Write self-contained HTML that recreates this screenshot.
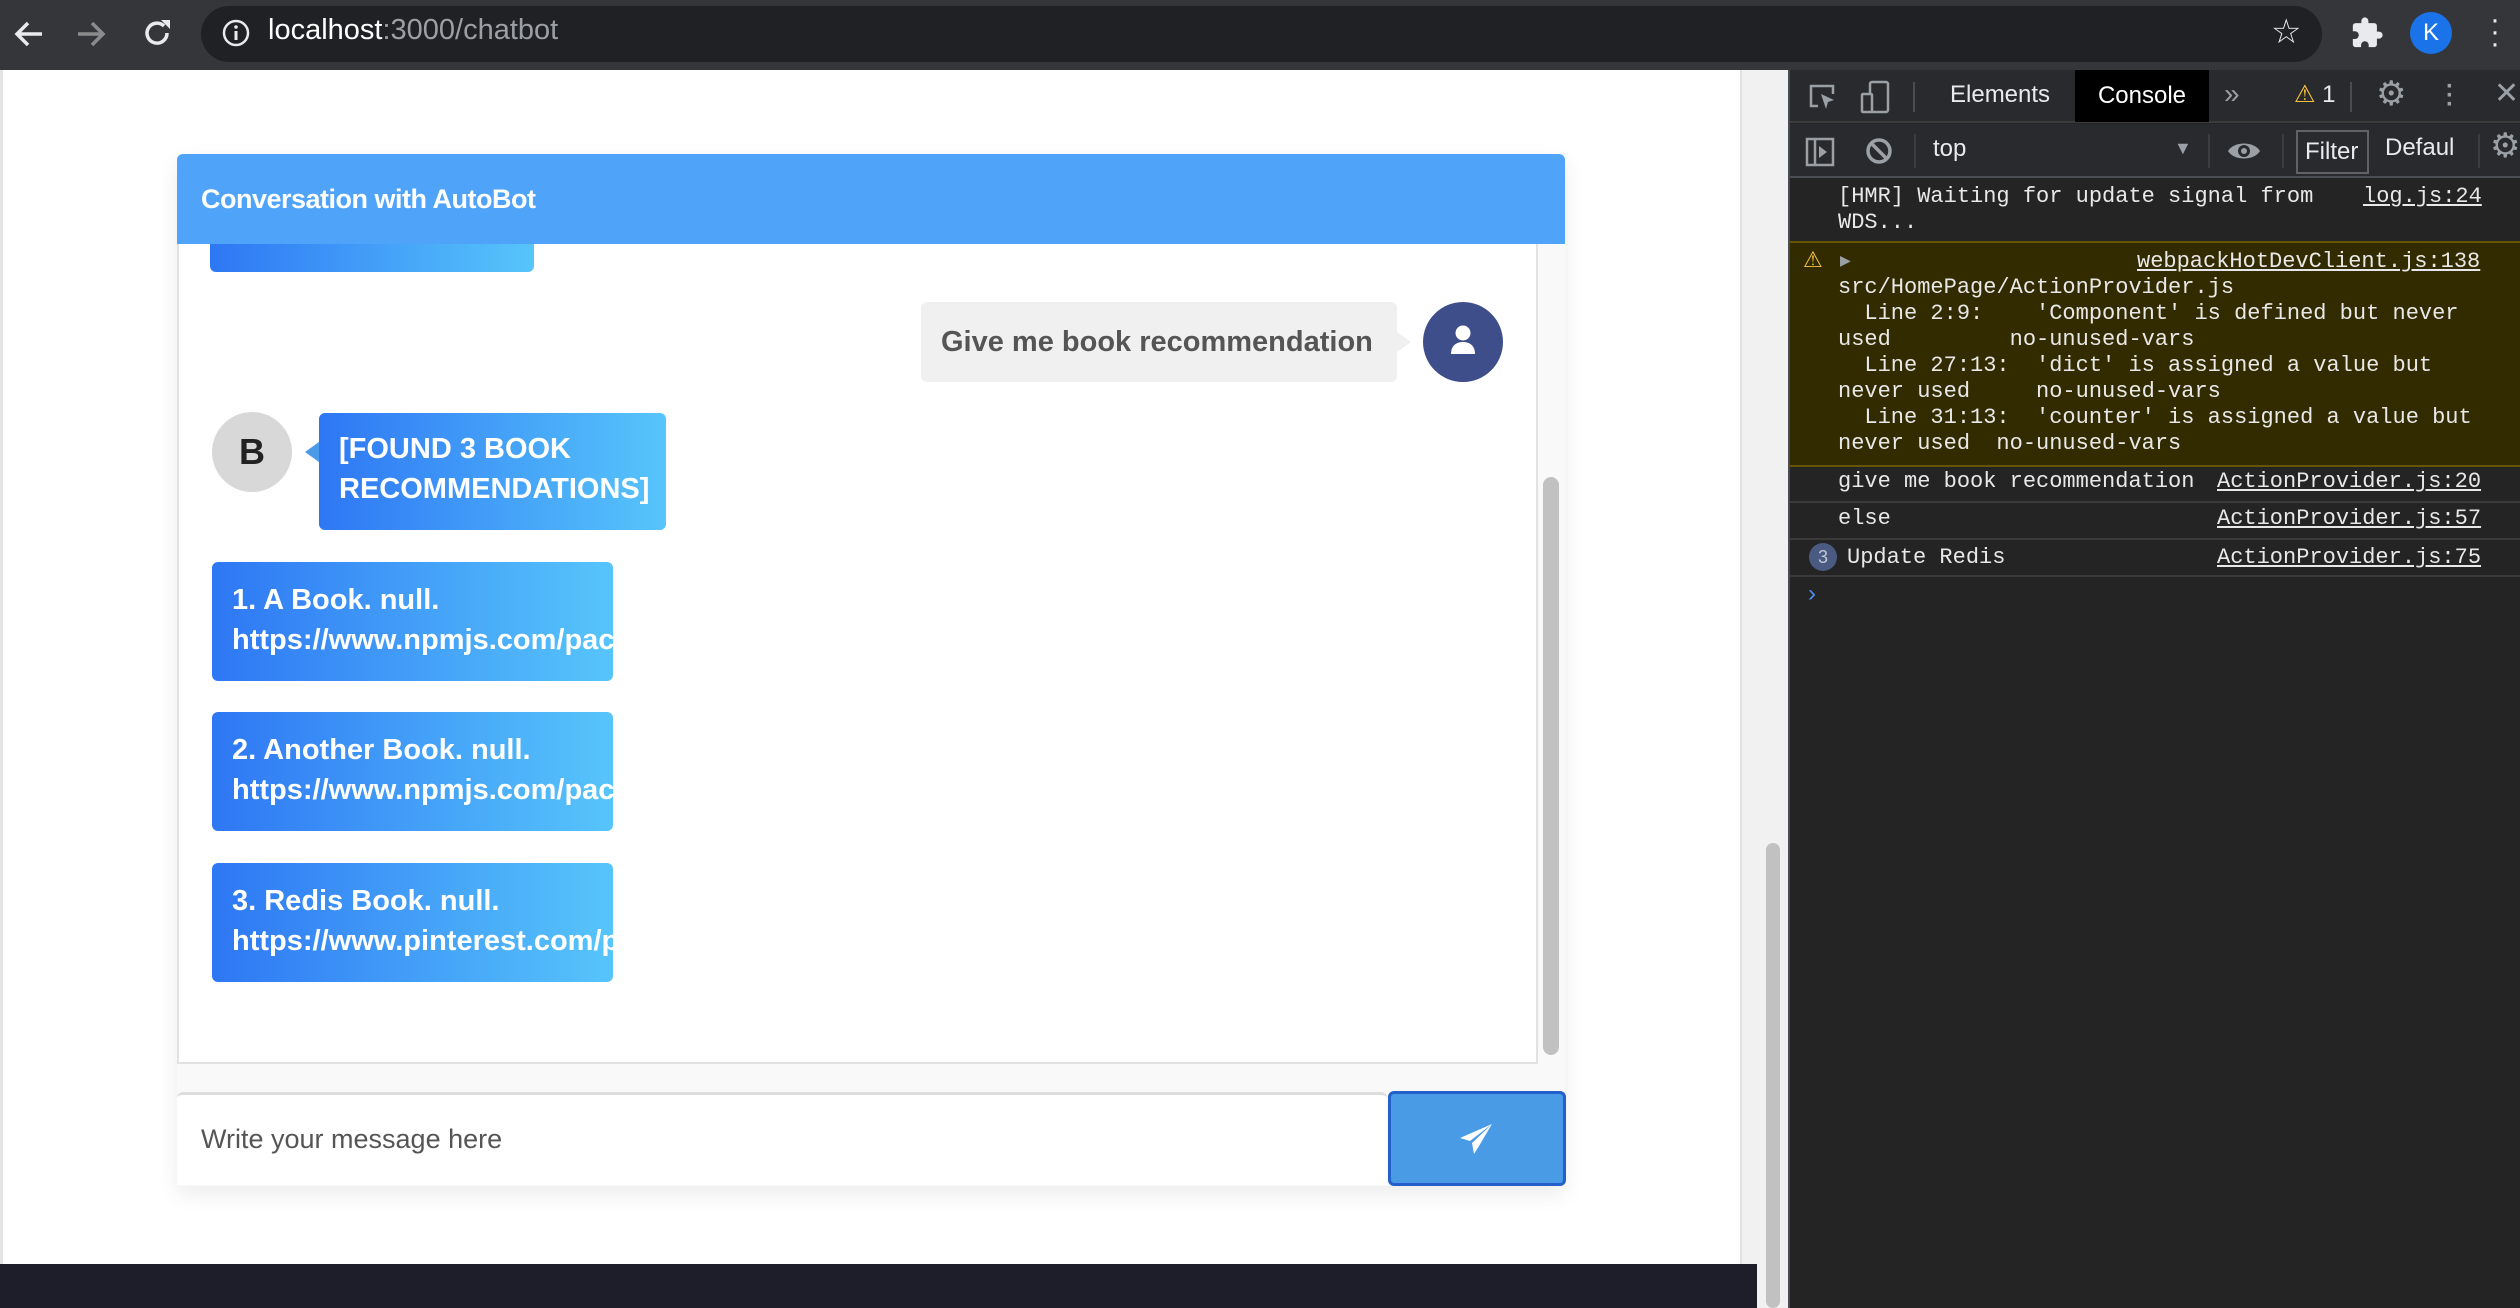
<!DOCTYPE html>
<html><head><meta charset="utf-8"><style>
*{margin:0;padding:0;box-sizing:border-box}
body{width:2520px;height:1308px;overflow:hidden;background:#fff;position:relative;font-family:"Liberation Sans",sans-serif}
.a{position:absolute}
.mono{font-family:"Liberation Mono",monospace;font-size:22px;color:#e8e8e8;white-space:pre;line-height:26px}
.lnk{text-decoration:underline}
.grad{background:linear-gradient(90deg,#2e77f4,#57c5fb);border-radius:6px;color:#fff;font-weight:bold;font-size:29px;line-height:40px;overflow:hidden;white-space:nowrap}
</style></head><body>
<!-- chrome top bar -->
<div class="a" style="left:0;top:0;width:2520px;height:70px;background:#35363a"></div>
<div class="a" style="left:201px;top:6px;width:2121px;height:56px;background:#202124;border-radius:28px"></div>
<svg class="a" style="left:12px;top:18px" width="36" height="32" viewBox="0 0 36 32"><path d="M30 16H6M16 5L5 16l11 11" stroke="#e8eaed" stroke-width="3.5" fill="none"/></svg>
<svg class="a" style="left:74px;top:18px" width="36" height="32" viewBox="0 0 36 32"><path d="M4 16h24M18 5l11 11-11 11" stroke="#8a8b8d" stroke-width="3.5" fill="none"/></svg>
<svg class="a" style="left:140px;top:16px" width="34" height="34" viewBox="0 0 34 34"><path d="M27 17a10 10 0 1 1-3-7" stroke="#e8eaed" stroke-width="3.5" fill="none"/><path d="M21 4h9v9z" fill="#e8eaed"/></svg>
<svg class="a" style="left:221px;top:18px" width="30" height="30" viewBox="0 0 30 30"><circle cx="15" cy="15" r="12" stroke="#e8eaed" stroke-width="2.5" fill="none"/><path d="M15 13v9" stroke="#e8eaed" stroke-width="3"/><circle cx="15" cy="9" r="1.8" fill="#e8eaed"/></svg>
<div class="a" style="left:268px;top:14px;font-size:29px;color:#fff">localhost<span style="color:#9aa0a6">:3000/chatbot</span></div>
<div class="a" style="left:2271px;top:12px;font-size:34px;color:#e8eaed">☆</div>
<svg class="a" style="left:2350px;top:16px" width="34" height="34" viewBox="0 0 24 24"><path d="M20.5 11H19V7a2 2 0 0 0-2-2h-4V3.5a2.5 2.5 0 0 0-5 0V5H4a2 2 0 0 0-2 2v3.8h1.5a2.7 2.7 0 0 1 0 5.4H2V20a2 2 0 0 0 2 2h3.8v-1.5a2.7 2.7 0 0 1 5.4 0V22H17a2 2 0 0 0 2-2v-4h1.5a2.5 2.5 0 0 0 0-5z" fill="#e8eaed"/></svg>
<div class="a" style="left:2410px;top:12px;width:42px;height:42px;border-radius:50%;background:#1a73e8;color:#fff;font-size:24px;text-align:center;line-height:42px">K</div>
<div class="a" style="left:2490px;top:14px;color:#e8eaed;font-size:30px;line-height:12px;width:10px;text-align:center">·<br>·<br>·</div>

<!-- page -->
<div class="a" style="left:0;top:70px;width:3px;height:1194px;background:#e4e4e4"></div>
<div class="a" style="left:1740px;top:70px;width:48px;height:1238px;background:#f1f1f1;border-left:2px solid #e0e0e0"></div>
<div class="a" style="left:1766px;top:843px;width:14px;height:465px;background:#c1c1c1;border-radius:7px"></div>
<div class="a" style="left:0;top:1264px;width:1757px;height:44px;background:#1e1e2b"></div>

<!-- chat -->
<div class="a" style="left:177px;top:154px;width:1388px;height:1032px;box-shadow:0 8px 20px rgba(0,0,0,.08);background:#f9f9f9"></div>
<div class="a" style="left:1543px;top:477px;width:16px;height:578px;background:#c1c1c1;border-radius:8px"></div>
<div class="a" style="left:177px;top:244px;width:1361px;height:820px;background:#fff;border:2px solid #e2e2e2;border-top:none;overflow:hidden">
  <div class="a grad" style="left:31px;top:-40px;width:324px;height:68px"></div>
  <div class="a" style="left:742px;top:58px;width:476px;height:80px;background:#f0f0f0;border-radius:6px;color:#555;font-weight:bold;font-size:29px;line-height:80px;padding-left:20px">Give me book recommendation</div>
  <div class="a" style="left:1218px;top:88px;border-left:14px solid #f0f0f0;border-top:10px solid transparent;border-bottom:10px solid transparent"></div>
  <div class="a" style="left:1244px;top:58px;width:80px;height:80px;border-radius:50%;background:#3d4e8a"></div>
  <svg class="a" style="left:1270px;top:80px" width="28" height="34" viewBox="0 0 28 34"><circle cx="14" cy="9" r="7.5" fill="#fff"/><path d="M2 30c0-8 5-12 12-12s12 4 12 12z" fill="#fff"/></svg>
  <div class="a" style="left:33px;top:168px;width:80px;height:80px;border-radius:50%;background:#d8d8d8;color:#222;font-weight:bold;font-size:36px;line-height:80px;text-align:center">B</div>
  <div class="a" style="left:126px;top:198px;border-right:14px solid #4a9ae8;border-top:10px solid transparent;border-bottom:10px solid transparent"></div>
  <div class="a grad" style="left:140px;top:169px;width:347px;height:117px;padding:16px 20px;white-space:normal">[FOUND 3 BOOK RECOMMENDATIONS]</div>
  <div class="a grad" style="left:33px;top:318px;width:401px;height:119px;padding:18px 20px">1. A Book. null.<br>https://www.npmjs.com/package</div>
  <div class="a grad" style="left:33px;top:468px;width:401px;height:119px;padding:18px 20px">2. Another Book. null.<br>https://www.npmjs.com/package</div>
  <div class="a grad" style="left:33px;top:619px;width:401px;height:119px;padding:18px 20px">3. Redis Book. null.<br>https://www.pinterest.com/pin</div>
</div>
<div class="a" style="left:177px;top:154px;width:1388px;height:90px;background:#4fa3f9;border-radius:6px 6px 0 0;color:#fff;font-weight:bold;font-size:27px;line-height:90px;padding-left:24px;letter-spacing:-.5px">Conversation with AutoBot</div>
<div class="a" style="left:177px;top:1092px;width:1210px;height:93px;background:#fff;border-top:3px solid #ddd;border-radius:6px 6px 0 0;color:#555;font-size:27px;line-height:88px;padding-left:24px">Write your message here</div>
<div class="a" style="left:1388px;top:1091px;width:178px;height:95px;background:#4a9be6;border:3px solid #2360c9;border-radius:6px"></div>
<svg class="a" style="left:1458px;top:1122px" width="36" height="34" viewBox="0 0 36 34"><path d="M34 2L2 16l10 3zM34 2L14 21l2 11 5-8 13-22z" fill="#fff"/></svg>

<!-- devtools -->
<div class="a" style="left:1788px;top:70px;width:732px;height:1238px;background:#242424;border-left:2px solid #494c50"></div>
<div class="a" style="left:1790px;top:70px;width:730px;height:53px;background:#292a2d;border-bottom:2px solid #3c3c3c"></div>
<svg class="a" style="left:1808px;top:82px" width="30" height="32" viewBox="0 0 30 32"><path d="M10 24H3V4h22v8" stroke="#9aa0a6" stroke-width="2.5" fill="none"/><path d="M13 12l13 6-6 2-2 7z" fill="#9aa0a6"/></svg>
<svg class="a" style="left:1860px;top:80px" width="32" height="34" viewBox="0 0 32 34"><rect x="10" y="2" width="18" height="30" rx="2" stroke="#9aa0a6" stroke-width="2.5" fill="none"/><rect x="2" y="14" width="10" height="18" rx="1" stroke="#9aa0a6" stroke-width="2.5" fill="#292a2d"/></svg>
<div class="a" style="left:1913px;top:82px;width:2px;height:30px;background:#494c50"></div>
<div class="a" style="left:1950px;top:81px;font-size:24px;color:#e8eaed">Elements</div>
<div class="a" style="left:2075px;top:70px;width:134px;height:52px;background:#000;color:#fff;font-size:24px;line-height:52px;text-align:center">Console</div>
<div class="a" style="left:2224px;top:78px;font-size:28px;color:#9aa0a6">»</div>
<div class="a" style="left:2294px;top:80px;font-size:24px;color:#f9c33c">⚠<span style="color:#e8eaed"> 1</span></div>
<div class="a" style="left:2350px;top:82px;width:2px;height:30px;background:#494c50"></div>
<div class="a" style="left:2376px;top:74px;font-size:34px;color:#9aa0a6">⚙</div>
<div class="a" style="left:2446px;top:82px;color:#9aa0a6;font-size:24px;line-height:9px;font-weight:bold">·<br>·<br>·</div>
<div class="a" style="left:2494px;top:76px;font-size:30px;color:#9aa0a6">✕</div>
<!-- toolbar 2 -->
<div class="a" style="left:1790px;top:124px;width:730px;height:54px;background:#292a2d;border-bottom:2px solid #494c50"></div>
<svg class="a" style="left:1805px;top:136px" width="32" height="32" viewBox="0 0 32 32"><rect x="2" y="3" width="26" height="26" stroke="#9aa0a6" stroke-width="2.5" fill="none"/><path d="M10 3v26" stroke="#9aa0a6" stroke-width="2.5"/><path d="M14 10l8 6-8 6z" fill="#9aa0a6"/></svg>
<svg class="a" style="left:1864px;top:136px" width="30" height="30" viewBox="0 0 30 30"><circle cx="15" cy="15" r="11" stroke="#9aa0a6" stroke-width="3.5" fill="none"/><path d="M7 7l16 16" stroke="#9aa0a6" stroke-width="3.5"/></svg>
<div class="a" style="left:1914px;top:134px;width:2px;height:34px;background:#3c3c3c"></div>
<div class="a" style="left:1933px;top:135px;font-size:24px;color:#e8eaed">top</div>
<div class="a" style="left:2174px;top:138px;font-size:18px;color:#9aa0a6">▼</div>
<div class="a" style="left:2208px;top:134px;width:2px;height:34px;background:#3c3c3c"></div>
<svg class="a" style="left:2226px;top:138px" width="36" height="26" viewBox="0 0 36 26"><path d="M2 13C8 3 28 3 34 13 28 23 8 23 2 13z" fill="#9aa0a6"/><circle cx="18" cy="13" r="6" fill="#292a2d"/><circle cx="18" cy="13" r="3" fill="#9aa0a6"/></svg>
<div class="a" style="left:2282px;top:134px;width:2px;height:34px;background:#3c3c3c"></div>
<div class="a" style="left:2296px;top:130px;width:73px;height:44px;border:2px solid #5f6368;color:#e8eaed;font-size:24px;line-height:40px;padding-left:7px">Filter</div>
<div class="a" style="left:2385px;top:134px;font-size:24px;color:#e8eaed">Defaul</div>
<div class="a" style="left:2478px;top:134px;width:2px;height:34px;background:#3c3c3c"></div>
<div class="a" style="left:2490px;top:126px;font-size:34px;color:#9aa0a6">⚙</div>
<!-- console lines -->
<div class="a mono" style="left:1838px;top:184px">[HMR] Waiting for update signal from
WDS...</div>
<div class="a mono lnk" style="left:2363px;top:184px">log.js:24</div>
<div class="a" style="left:1790px;top:241px;width:730px;height:226px;background:#332b00;border-top:2px solid #665500;border-bottom:2px solid #665500"></div>
<div class="a" style="left:1803px;top:247px;font-size:22px;color:#f9c33c">⚠</div>
<div class="a" style="left:1840px;top:252px;font-size:14px;color:#9aa0a6">▶</div>
<div class="a mono lnk" style="left:2137px;top:249px">webpackHotDevClient.js:138</div>
<div class="a mono" style="left:1838px;top:275px">src/HomePage/ActionProvider.js
  Line 2:9:    'Component' is defined but never
used         no-unused-vars
  Line 27:13:  'dict' is assigned a value but
never used     no-unused-vars
  Line 31:13:  'counter' is assigned a value but
never used  no-unused-vars</div>
<div class="a mono" style="left:1838px;top:469px">give me book recommendation</div>
<div class="a mono lnk" style="left:2217px;top:469px">ActionProvider.js:20</div>
<div class="a" style="left:1790px;top:501px;width:730px;height:2px;background:#3a3a3a"></div>
<div class="a mono" style="left:1838px;top:506px">else</div>
<div class="a mono lnk" style="left:2217px;top:506px">ActionProvider.js:57</div>
<div class="a" style="left:1790px;top:538px;width:730px;height:2px;background:#3a3a3a"></div>
<div class="a" style="left:1809px;top:543px;width:28px;height:28px;border-radius:50%;background:#4a5a80;color:#c0c8d8;font-size:18px;line-height:28px;text-align:center">3</div>
<div class="a mono" style="left:1847px;top:545px">Update Redis</div>
<div class="a mono lnk" style="left:2217px;top:545px">ActionProvider.js:75</div>
<div class="a" style="left:1790px;top:575px;width:730px;height:2px;background:#3a3a3a"></div>
<div class="a" style="left:1808px;top:580px;font-size:24px;color:#4c8df6">›</div>
</body></html>
